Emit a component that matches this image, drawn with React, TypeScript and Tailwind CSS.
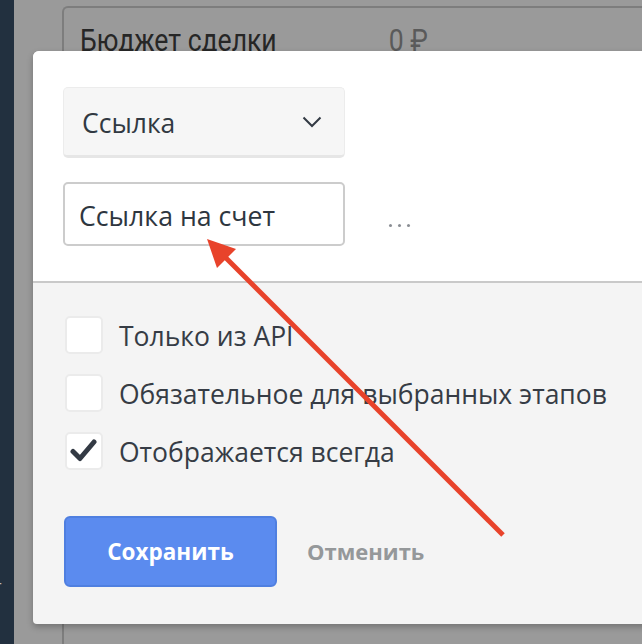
import React from 'react';

const sans = { fontFamily: '"Open Sans", "Noto Sans", sans-serif' };
const narrow = { fontFamily: '"Liberation Sans Narrow", "Roboto", sans-serif' };

function Checkbox({ checked }: { checked?: boolean }) {
  return (
    <div className="w-[38px] h-[38px] shrink-0 rounded-[5px] bg-white border-2 border-[#ebebeb] flex items-center justify-center">
      {checked && (
        <svg width="28" height="26" viewBox="0 0 28 26">
          <path
            d="M3 13.5 L10 20.5 L24 4"
            fill="none"
            stroke="#333a44"
            strokeWidth="5"
            strokeLinecap="round"
            strokeLinejoin="round"
          />
        </svg>
      )}
    </div>
  );
}

function CheckRow({ label, checked }: { label: string; checked?: boolean }) {
  return (
    <label className="flex items-center gap-[16px]">
      <Checkbox checked={checked} />
      <span className="text-[26.5px] text-[#363c45] leading-none pt-[3px]" style={sans}>
        {label}
      </span>
    </label>
  );
}

export default function App() {
  return (
    <div className="relative w-[642px] h-[644px] overflow-hidden bg-[#9a9a9a] flex">
      {/* sidebar */}
      <div className="w-[14px] shrink-0 bg-[#22303f] flex flex-col justify-end pb-[50px] overflow-hidden">
        <span className="text-[16px] text-[#b8bcc2] -ml-[6px] leading-none" style={sans}>
          т
        </span>
      </div>

      {/* deal card behind the overlay */}
      <div className="ml-[48px] mt-[6px] flex-1 border-2 border-r-0 border-b-0 border-[#7d7d7d] rounded-tl-[6px] pl-[16px] pt-[8px]">
        <div className="flex items-baseline origin-left scale-x-[0.83]" style={narrow}>
          <span className="w-[372px] text-[32px] text-[#262626]">Бюджет сделки</span>
          <span className="text-[32px] text-[#5a5a5a]">0 ₽</span>
        </div>
      </div>

      {/* field settings modal */}
      <div className="absolute left-[33px] top-[51px] w-[640px] h-[573px] bg-[#f4f4f4] rounded-tl-[6px] rounded-bl-[4px] shadow-[0_3px_6px_rgba(0,0,0,0.25)] flex flex-col overflow-hidden">
        <div className="bg-white pl-[30px] pt-[36px] pb-[35px] flex flex-col gap-[24px] border-b-2 border-[#c9c9c9]">
          <div className="w-[282px] h-[71px] rounded-[5px] bg-[#f6f6f6] border border-[#ececec] border-b-[3px] border-b-[#e6e6e6] flex items-center justify-between pl-[18px] pr-[22px]">
            <span className="text-[26.5px] text-[#313942] pt-[5px]" style={sans}>
              Ссылка
            </span>
            <svg width="20" height="12" viewBox="0 0 20 12">
              <path d="M1.5 1.5 L10 10 L18.5 1.5" fill="none" stroke="#333a44" strokeWidth="2" />
            </svg>
          </div>
          <div className="flex items-center">
            <div className="w-[282px] h-[64px] rounded-[5px] border-2 border-[#cccccc] flex items-center pl-[14px]">
              <span className="text-[26.7px] text-[#2e3640] pt-[5px]" style={sans}>
                Ссылка на счет
              </span>
            </div>
            <div className="ml-[44px] mt-[22px] flex gap-[6px]">
              <span className="w-[3px] h-[3px] rounded-full bg-[#8a8e94]" />
              <span className="w-[3px] h-[3px] rounded-full bg-[#8a8e94]" />
              <span className="w-[3px] h-[3px] rounded-full bg-[#8a8e94]" />
            </div>
          </div>
        </div>

        <div className="pl-[32px] pt-[33px] flex flex-col gap-[20px]">
          <CheckRow label="Только из API" />
          <CheckRow label="Обязательное для выбранных этапов" />
          <CheckRow label="Отображается всегда" checked />
        </div>

        <div className="pl-[31px] mt-[46px] flex items-center">
          <button
            className="w-[213px] h-[71px] rounded-[6px] bg-[#5b8bef] border-2 border-[#4f7fe0] text-white text-[22.5px] font-bold"
            style={sans}
          >
            Сохранить
          </button>
          <button className="ml-[30px] text-[22px] font-bold text-[#95989a]" style={sans}>
            Отменить
          </button>
        </div>
      </div>

      {/* annotation arrow */}
      <svg className="absolute left-0 top-0 pointer-events-none" width="642" height="644" viewBox="0 0 642 644">
        <line x1="503" y1="535" x2="222" y2="254" stroke="#e8432b" strokeWidth="5" />
        <path d="M207 239 L236 249 L217 268 Z" fill="#e8432b" />
      </svg>
    </div>
  );
}
